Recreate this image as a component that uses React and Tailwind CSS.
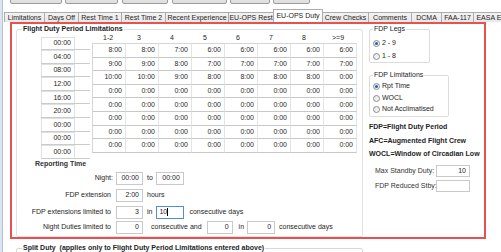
const times = ['00:00', '04:00', '08:00', '12:00', '16:00', '20:00', '00:00', '00:00', '00:00'];
const heads = ['1-2', '3', '4', '5', '6', '7', '8', '>=9'];
const zeros = ['0:00', '0:00', '0:00', '0:00', '0:00', '0:00', '0:00', '0:00'];
const grid = [
  ['8:00', '8:00', '7:00', '6:00', '6:00', '6:00', '6:00', '6:00'],
  ['9:00', '9:00', '8:00', '7:00', '7:00', '7:00', '7:00', '7:00'],
  ['10:00', '10:00', '9:00', '8:00', '8:00', '8:00', '8:00', '0:00'],
  zeros, zeros, zeros, zeros, zeros,
];
const tabs = [
  ['Limitations', 41], ['Days Off', 34], ['Rest Time 1', 43], ['Rest Time 2', 44],
  ['Recent Experience', 63], ['EU-OPS Rest', 45], ['EU-OPS Duty', 50], ['Crew Checks', 46],
  ['Comments', 43], ['DCMA', 30], ['FAA-117', 32], ['EASA Extras', 46],
];
const buttons = [[7, 52], [3, 53], [4, 46], [4, 55], [3, 40], [3, 37]];

function Radio({ checked, label }) {
  return (
    <div className="flex items-center h-[10px] ml-[3px]">
      <span className="w-[7px] h-[7px] rounded-full border border-[#8c8c8c] bg-gradient-to-br from-[#e6e6e6] to-[#fafafa] flex items-center justify-center">
        {checked && <span className="w-[3px] h-[3px] rounded-full bg-[#1d62b5]" />}
      </span>
      <span className="ml-[2px]">{label}</span>
    </div>
  );
}

function Box({ w, children, focused }) {
  return (
    <div
      className={`h-full bg-white border flex items-center ${focused ? 'border-[#4f8fd6] justify-start pl-[2px]' : 'border-[#c9c9c9] justify-end pr-[3px]'} ${w}`}
    >
      {children}
      {focused && <span className="w-px h-[8px] bg-black" />}
    </div>
  );
}

export default function App() {
  return (
    <div className="w-[501px] h-[252px] overflow-hidden bg-white flex font-['Liberation_Sans',Arial,sans-serif] text-[7px] leading-[8px] text-[#1e1e1e]">
      <div className="w-[3px] h-full shrink-0 bg-[#dbe5f2] border-r border-[#b4c2d4]" />
      <div className="flex-1 flex flex-col">
        {/* buttons (cut off at top) */}
        <div className="h-[5px] shrink-0 overflow-hidden flex items-end">
          {buttons.map(([ml, w], i) => (
            <div
              key={i}
              style={{ marginLeft: ml, width: w }}
              className="h-[16px] shrink-0 mb-[1px] rounded-[2px] border border-[#9c9c9c] bg-gradient-to-b from-[#f4f4f4] to-[#dedede]"
            />
          ))}
        </div>
        {/* tabs */}
        <div className="h-[17px] shrink-0 flex items-end ml-[1px]">
          {tabs.map(([t, w], i) => {
            const sel = t === 'EU-OPS Duty';
            return (
              <div
                key={t}
                style={{ width: w }}
                className={`shrink-0 flex items-center justify-center whitespace-nowrap overflow-hidden border-t border-r border-[#acacac] ${i === 0 ? 'border-l' : ''} ${sel ? 'h-[13px] bg-white border-l -ml-px' : 'h-[10px] bg-gradient-to-b from-[#f3f3f3] to-[#e8e8e8]'}`}
              >
                {t}
              </div>
            );
          })}
        </div>
        {/* red panel */}
        <div className="shrink-0 ml-[7px] w-[476px] h-[217px] border-2 border-[#e5524f] flex">
          {/* left group */}
          <fieldset className="shrink-0 ml-[4px] mt-[1px] w-[347px] h-[212px] border border-[#e2e2e2] rounded-[2px]">
            <legend className="ml-[5px] px-[1px] font-bold">Flight Duty Period Limitations</legend>
            <div className="flex items-start ml-[24px]">
              <div className="mt-[3.5px] flex flex-col">
                {times.map((t, i) => (
                  <div key={i} className="w-[49px] h-[13.6px] border-b border-[#cbcbcb] flex">
                    <div className="w-[34px] h-full bg-white border-x border-t border-[#e0e0e0] flex items-center justify-end pr-[3px]">
                      {t}
                    </div>
                  </div>
                ))}
              </div>
              <div className="ml-[2px] flex flex-col">
                <div className="h-[10px] flex items-center">
                  {heads.map((h, i) => (
                    <div
                      key={h}
                      className={`w-[33px] ${i === 0 ? 'pl-[11px]' : i === 7 ? 'pl-[9px]' : 'pl-[12px]'}`}
                    >
                      {h}
                    </div>
                  ))}
                </div>
                <div className="border-t border-l border-[#d6d6d6]">
                  {grid.map((r, ri) => (
                    <div key={ri} className="flex h-[13.6px]">
                      {r.map((v, ci) => (
                        <div
                          key={ci}
                          className="w-[33px] h-full border-r border-r-[#e4e4e4] border-b border-b-[#c8c8c8] flex items-center justify-end pr-[3px] text-[#2a2a2a]"
                        >
                          {v}
                        </div>
                      ))}
                    </div>
                  ))}
                </div>
              </div>
            </div>
            <div className="ml-[18px] mt-[1px] h-[8px] font-bold text-[#333]">Reporting Time</div>

            <div className="mt-[4px] h-[13px] flex items-center">
              <div className="w-[96px] text-right">Night:</div>
              <div className="ml-[3px] h-full"><Box w="w-[27px]">00:00</Box></div>
              <div className="ml-[4px]">to</div>
              <div className="ml-[3px] h-full"><Box w="w-[28px]">00:00</Box></div>
            </div>
            <div className="mt-[4px] h-[13px] flex items-center">
              <div className="w-[96px] text-right pr-[2px]">FDP extension</div>
              <div className="ml-[3px] h-full"><Box w="w-[27px]">2:00</Box></div>
              <div className="ml-[4px]">hours</div>
            </div>
            <div className="mt-[4px] h-[13px] flex items-center">
              <div className="w-[96px] text-right pr-[2px]">FDP extensions limited to</div>
              <div className="ml-[3px] h-full"><Box w="w-[27px]">3</Box></div>
              <div className="ml-[4px]">in</div>
              <div className="ml-[4px] h-full"><Box w="w-[28px]" focused>10</Box></div>
              <div className="ml-[5px]">consecutive days</div>
            </div>
            <div className="mt-[2px] h-[13px] flex items-center">
              <div className="w-[96px] text-right pr-[2px]">Night Duties limited to</div>
              <div className="ml-[3px] h-full"><Box w="w-[27px]">0</Box></div>
              <div className="ml-[8px]">consecutive and</div>
              <div className="ml-[5px] h-full"><Box w="w-[26px]">0</Box></div>
              <div className="ml-[6px]">in</div>
              <div className="ml-[3px] h-full"><Box w="w-[28px]">0</Box></div>
              <div className="ml-[4px]">consecutive days</div>
            </div>
          </fieldset>

          {/* right column */}
          <div className="ml-[6px] flex flex-col">
            <fieldset className="shrink-0 mt-[1px] w-[61px] h-[38px] border border-[#dcdcdc] rounded-[2px]">
              <legend className="ml-[3px] px-[1px]">FDP Legs</legend>
              <div className="mt-[5px]"><Radio checked label="2 - 9" /></div>
              <div className="mt-[3px]"><Radio label="1 - 8" /></div>
            </fieldset>
            <fieldset className="shrink-0 mt-[8px] w-[80px] h-[46px] border border-[#dcdcdc] rounded-[2px]">
              <legend className="ml-[3px] px-[1px]">FDP Limitations</legend>
              <div className="mt-[2px]"><Radio checked label="Rpt Time" /></div>
              <div className="mt-[2px]"><Radio label="WOCL" /></div>
              <div className="mt-[1px]"><Radio label="Not Acclimatised" /></div>
            </fieldset>
            <div className="shrink-0 mt-[6px] h-[8px] font-bold whitespace-nowrap">FDP=Flight Duty Period</div>
            <div className="shrink-0 mt-[6px] h-[8px] font-bold whitespace-nowrap">AFC=Augmented Flight Crew</div>
            <div className="shrink-0 mt-[5px] h-[8px] font-bold whitespace-nowrap">WOCL=Window of Circadian Low</div>
            <div className="shrink-0 mt-[7px] h-[12px] flex items-center">
              <div className="ml-[6px] w-[61px] whitespace-nowrap text-[#333]">Max Standby Duty:</div>
              <div className="h-full"><Box w="w-[34px]">10</Box></div>
            </div>
            <div className="shrink-0 mt-[3px] h-[12px] flex items-center">
              <div className="ml-[6px] w-[61px] whitespace-nowrap text-[#333]">FDP Reduced Stby:</div>
              <div className="h-full"><Box w="w-[34px]"></Box></div>
            </div>
          </div>
        </div>
        {/* split duty */}
        <fieldset className="shrink-0 ml-[13px] mt-[5px] w-[347px] h-[30px] border border-[#d8d8d8] rounded-[2px]">
          <legend className="ml-[5px] px-[1px] font-bold whitespace-nowrap">
            Split Duty&nbsp;&nbsp;(applies only to Flight Duty Period Limitations entered above)
          </legend>
        </fieldset>
      </div>
    </div>
  );
}
